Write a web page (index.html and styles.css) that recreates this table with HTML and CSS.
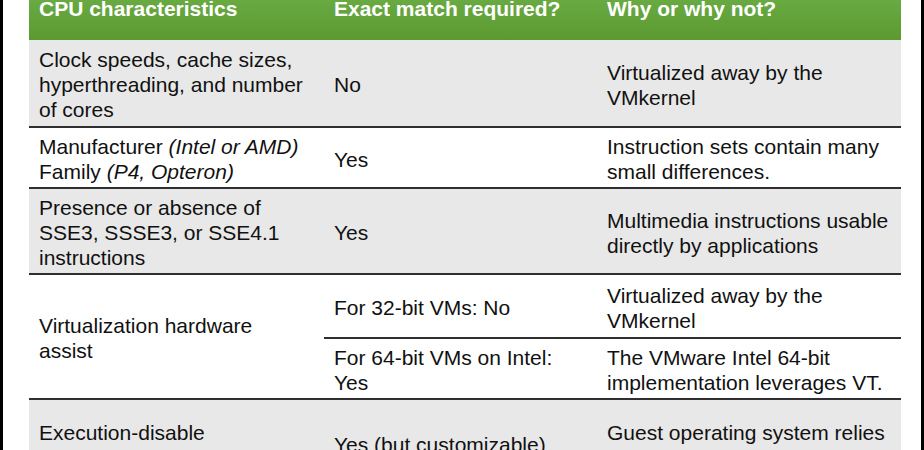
FILE: index.html
```html
<!DOCTYPE html>
<html>
<head>
<meta charset="utf-8">
<link rel="stylesheet" href="styles.css">
</head>
<body>
<div class="frame">
  <div class="grid">
    <div class="hd"><span>CPU characteristics</span></div>
    <div class="hd"><span>Exact match required?</span></div>
    <div class="hd"><span>Why or why not?</span></div>

    <div class="c g"><span>Clock speeds, cache sizes,<br>hyperthreading, and number<br>of cores</span></div>
    <div class="c g"><span>No</span></div>
    <div class="c g"><span>Virtualized away by the<br>VMkernel</span></div>

    <div class="c w"><span>Manufacturer <i>(Intel or AMD)</i><br>Family <i>(P4, Opteron)</i></span></div>
    <div class="c w"><span>Yes</span></div>
    <div class="c w"><span>Instruction sets contain many<br>small differences.</span></div>

    <div class="c g"><span>Presence or absence of<br>SSE3, SSSE3, or SSE4.1<br>instructions</span></div>
    <div class="c g"><span>Yes</span></div>
    <div class="c g"><span>Multimedia instructions usable<br>directly by applications</span></div>

    <div class="c w span2"><span>Virtualization hardware<br>assist</span></div>
    <div class="c w"><span>For 32-bit VMs: No</span></div>
    <div class="c w"><span>Virtualized away by the<br>VMkernel</span></div>
    <div class="c w"><span>For 64-bit VMs on Intel:<br>Yes</span></div>
    <div class="c w"><span>The VMware Intel 64-bit<br>implementation leverages VT.</span></div>

    <div class="c g"><span>Execution-disable<br>(NX/XD bit)</span></div>
    <div class="c g"><span>Yes (but customizable)</span></div>
    <div class="c g"><span>Guest operating system relies<br>on NX/XD bit if detected</span></div>
  </div>
</div>
</body>
</html>
```
FILE: styles.css
```css
html, body {
  margin: 0;
  padding: 0;
  background: #fff;
}

body {
  font-family: "Liberation Sans", Arial, sans-serif;
}

.frame {
  border-left: 3px solid #000;
  border-right: 3px solid #000;
  padding-left: 26px;
  padding-right: 20px;
  height: 450px;
  overflow: hidden;
}

.grid {
  display: grid;
  grid-template-columns: 295px 273px 304px;
  grid-template-rows: 44px 88px 61px 86px 64px 61px 88px;
  margin-top: -4px;
  font-size: 21px;
  line-height: 25px;
  color: #111;
}

.hd {
  background: linear-gradient(#6bab44, #5a9a30);
  color: #fff;
  font-weight: bold;
  padding: 0 10px;
}

.c {
  display: flex;
  align-items: center;
  box-sizing: border-box;
  padding: 3px 10px 0;
  border-bottom: 2px solid #2f2f2f;
}

.g {
  background: #e8e8e8;
}

.w {
  background: #fff;
}

.span2 {
  grid-row: span 2;
}
```
